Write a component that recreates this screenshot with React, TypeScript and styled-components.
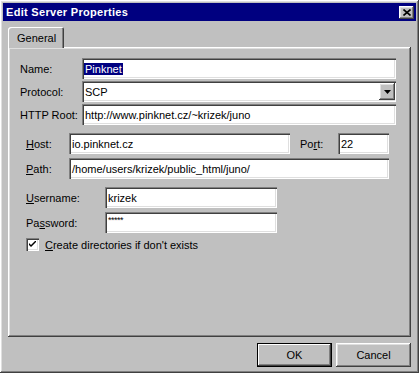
import styled, { createGlobalStyle } from "styled-components";

const GlobalStyle = createGlobalStyle`
  html, body {
    margin: 0;
    padding: 0;
    background: #c0c0c0;
  }
  body {
    font-family: "Liberation Sans", Arial, sans-serif;
    font-size: 11px;
    color: #000;
  }
`;

const raised = `
  box-shadow:
    inset -1px -1px #404040,
    inset 1px 1px #ffffff,
    inset -2px -2px #808080,
    inset 2px 2px #dfdfdf;
`;

const sunken = `
  box-shadow:
    inset 1px 1px #808080,
    inset 2px 2px #404040,
    inset -1px -1px #ffffff,
    inset -2px -2px #dfdfdf;
`;

const Window = styled.div`
  width: 419px;
  height: 373px;
  box-sizing: border-box;
  padding: 3px;
  background: #c0c0c0;
  display: flex;
  flex-direction: column;
  ${raised}
`;

const TitleBar = styled.div`
  height: 18px;
  background: #000080;
  display: flex;
  align-items: center;
  justify-content: space-between;
  padding: 0 2px 0 3px;
`;

const Title = styled.span`
  color: #fff;
  font-weight: bold;
  font-size: 11px;
  letter-spacing: 0.3px;
`;

const CloseButton = styled.div`
  width: 15px;
  height: 13px;
  background: #c0c0c0;
  display: flex;
  align-items: center;
  justify-content: center;
  ${raised}
`;

const Content = styled.div`
  flex: 1;
  display: flex;
  flex-direction: column;
  padding: 6px 5px 0 5px;
`;

const TabRow = styled.div`
  height: 20px;
  display: flex;
  align-items: flex-end;
  position: relative;
  z-index: 1;
`;

const Tab = styled.div`
  height: 21px;
  margin-bottom: -1px;
  padding: 0 8px 0 9px;
  display: flex;
  align-items: center;
  background: #c0c0c0;
  border-top-left-radius: 3px;
  border-top-right-radius: 2px;
  box-shadow:
    inset 1px 1px #ffffff,
    inset -1px 0 #404040,
    inset -2px 0 #808080;
`;

const Panel = styled.div`
  height: 290px;
  box-sizing: border-box;
  padding-top: 11px;
  display: flex;
  flex-direction: column;
  ${raised}
`;

const Grid = styled.div<{ $left: number; $right: number; $cols: string; $gap: number; $top?: number }>`
  display: grid;
  grid-template-columns: ${(p) => p.$cols};
  grid-auto-rows: 21px;
  row-gap: ${(p) => p.$gap}px;
  margin: ${(p) => p.$top ?? 0}px ${(p) => p.$right}px 0 ${(p) => p.$left}px;
  align-items: center;
`;

const Label = styled.span<{ $pad?: number }>`
  white-space: nowrap;
  padding-left: ${(p) => p.$pad ?? 0}px;
`;

const Field = styled.div<{ $span?: string; $small?: boolean }>`
  height: 21px;
  box-sizing: border-box;
  background: #fff;
  padding: 0 3px;
  display: flex;
  align-items: ${(p) => (p.$small ? "flex-start" : "center")};
  white-space: nowrap;
  overflow: hidden;
  grid-column: ${(p) => p.$span ?? "auto"};
  ${sunken}
`;

const Selected = styled.span`
  background: #000080;
  color: #fff;
  padding: 0 1px;
  margin-left: -1px;
`;

const SelectValue = styled.span`
  flex: 1;
`;

const DropButton = styled.div`
  width: 16px;
  height: 17px;
  margin-right: -1px;
  background: #c0c0c0;
  display: flex;
  align-items: center;
  justify-content: center;
  ${raised}
`;

const Stars = styled.span`
  font-size: 9px;
  letter-spacing: -0.5px;
  margin-top: 3px;
`;

const CheckRow = styled.div`
  display: flex;
  align-items: center;
  gap: 6px;
  margin: 5px 0 0 18px;
`;

const CheckBox = styled.div`
  width: 13px;
  height: 13px;
  background: #fff;
  display: flex;
  align-items: center;
  justify-content: center;
  ${sunken}
`;

const ButtonRow = styled.div`
  display: flex;
  justify-content: flex-end;
  gap: 4px;
  margin-top: 6px;
`;

const Button = styled.div<{ $default?: boolean }>`
  width: 75px;
  height: 24px;
  box-sizing: border-box;
  background: #c0c0c0;
  display: flex;
  align-items: center;
  justify-content: center;
  ${(p) =>
    p.$default
      ? `box-shadow:
          inset 0 0 0 1px #000,
          inset -2px -2px #404040,
          inset 2px 2px #ffffff,
          inset -3px -3px #808080;`
      : raised}
`;

export default function App() {
  return (
    <>
      <GlobalStyle />
      <Window>
        <TitleBar>
          <Title>Edit Server Properties</Title>
          <CloseButton>
            <svg width="8" height="7" viewBox="0 0 8 7">
              <path d="M0.5 0.5 L7.5 6.5 M7.5 0.5 L0.5 6.5" stroke="#000" strokeWidth="1.6" />
            </svg>
          </CloseButton>
        </TitleBar>
        <Content>
          <TabRow>
            <Tab>General</Tab>
          </TabRow>
          <Panel>
            <Grid $left={12} $right={15} $cols="62px 1fr" $gap={2}>
              <Label>Name:</Label>
              <Field>
                <Selected>Pinknet</Selected>
              </Field>
              <Label>Protocol:</Label>
              <Field style={{ paddingRight: 2 }}>
                <SelectValue>SCP</SelectValue>
                <DropButton>
                  <svg width="7" height="4" viewBox="0 0 7 4">
                    <path d="M0 0 H7 L3.5 4 Z" fill="#000" />
                  </svg>
                </DropButton>
              </Field>
              <Label>HTTP Root:</Label>
              <Field>http://www.pinknet.cz/~krizek/juno</Field>
            </Grid>

            <Grid $left={18} $right={22} $cols="43px 221px 48px 51px" $gap={4} $top={8}>
              <Label>
                <u>H</u>ost:
              </Label>
              <Field>io.pinknet.cz</Field>
              <Label $pad={10}>
                Po<u>r</u>t:
              </Label>
              <Field>22</Field>
              <Label>
                <u>P</u>ath:
              </Label>
              <Field $span="2 / 5">/home/users/krizek/public_html/juno/</Field>
            </Grid>

            <Grid $left={18} $right={0} $cols="79px 172px" $gap={4} $top={8}>
              <Label>
                <u>U</u>sername:
              </Label>
              <Field>krizek</Field>
              <Label>
                Pa<u>s</u>sword:
              </Label>
              <Field $small>
                <Stars>*****</Stars>
              </Field>
            </Grid>

            <CheckRow>
              <CheckBox>
                <svg width="7" height="7" viewBox="0 0 7 7">
                  <path d="M0 2 L0 4 L2 6 L7 1 L7 -1 L2 4 Z" fill="#000" />
                </svg>
              </CheckBox>
              <span>
                <u>C</u>reate directories if don't exists
              </span>
            </CheckRow>
          </Panel>
          <ButtonRow>
            <Button $default>OK</Button>
            <Button>Cancel</Button>
          </ButtonRow>
        </Content>
      </Window>
    </>
  );
}
